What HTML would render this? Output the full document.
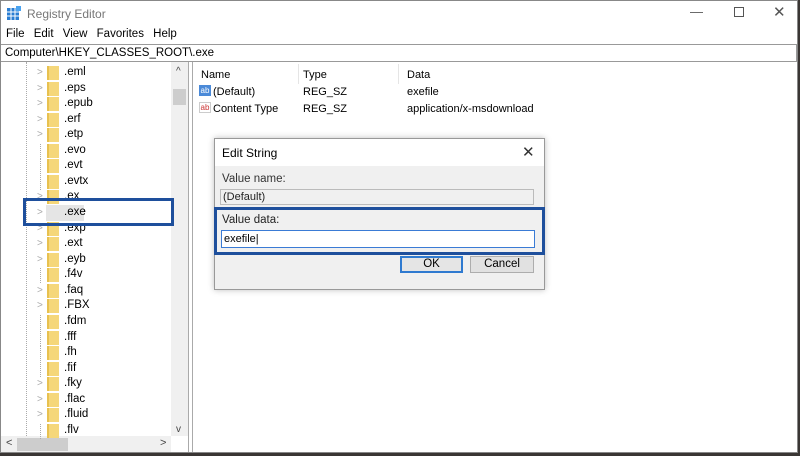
<!DOCTYPE html><html><head><style>
*{margin:0;padding:0;box-sizing:border-box}
body{width:800px;height:456px;background:#3a3634;font-family:"Liberation Sans",sans-serif;font-size:11px;color:#000;position:relative;overflow:hidden}
.a{position:absolute}
.win{left:0;top:0;width:798px;height:453px;background:#fff;border:1px solid #888}
.tr{position:absolute;left:64px;font-size:11.5px}
.fo{position:absolute;left:47px;width:12px;height:14px;background:#f5d77a;border-left:2px solid #e8c14f}
.ar{position:absolute;left:37px;color:#aaa;font-size:10px}
.ln{position:absolute;left:40px;width:1px;height:15px;border-left:1px dotted #aaa}
</style></head><body>
<div class="a win"></div>
<svg class="a" style="left:7px;top:6px" width="14" height="14"><rect x="0" y="2" width="12" height="12" fill="#2a7ed3"/><g stroke="#fff" stroke-width="1"><line x1="4" y1="2" x2="4" y2="14"/><line x1="8" y1="2" x2="8" y2="14"/><line x1="0" y1="6" x2="12" y2="6"/><line x1="0" y1="10" x2="12" y2="10"/></g><rect x="9" y="0" width="5" height="5" fill="#4aa3f0"/></svg>
<div class="a" style="left:27px;top:7px;font-size:12px;color:#777">Registry Editor</div>
<div class="a" style="left:690px;top:4px;font-size:13px;color:#555">—</div>
<div class="a" style="left:734px;top:7px;width:10px;height:10px;border:1px solid #555"></div>
<div class="a" style="left:773px;top:3px;font-size:15px;color:#555">✕</div>
<div class="a" style="left:6px;top:28px;font-size:11.5px;word-spacing:6px">File Edit View Favorites Help</div>
<div class="a" style="left:1px;top:44px;width:796px;height:18px;border:1px solid #999;border-left:none"></div>
<div class="a" style="left:5px;top:47px;font-size:11.5px">Computer\HKEY_CLASSES_ROOT\.exe</div>
<div class="a" style="left:1px;top:62px;width:188px;height:390px;border-right:1px solid #aaa"></div>
<div class="a" style="left:171px;top:62px;width:17px;height:374px;background:#f0f0f0"></div>
<div class="a" style="left:173px;top:89px;width:13px;height:16px;background:#cdcdcd"></div>
<div class="a" style="left:176px;top:66px;font-size:10px;color:#444">^</div>
<div class="a" style="left:176px;top:424px;font-size:10px;color:#444">v</div>
<div class="a" style="left:1px;top:436px;width:170px;height:16px;background:#f0f0f0"></div>
<div class="a" style="left:17px;top:438px;width:51px;height:13px;background:#cdcdcd"></div>
<div class="a" style="left:6px;top:437px;color:#444">&lt;</div>
<div class="a" style="left:160px;top:437px;color:#444">&gt;</div>
<div class="a" style="left:26px;top:62px;width:1px;height:374px;border-left:1px dotted #aaa"></div>
<div class="a" style="left:192px;top:62px;width:1px;height:390px;background:#aaa"></div>
<div class="a" style="left:193px;top:62px;width:604px;height:390px">
<div class="a" style="left:105px;top:2px;width:1px;height:20px;background:#e5e5e5"></div>
<div class="a" style="left:205px;top:2px;width:1px;height:20px;background:#e5e5e5"></div>
<div class="a" style="left:8px;top:7px">Name</div><div class="a" style="left:110px;top:7px">Type</div><div class="a" style="left:214px;top:7px">Data</div>
<div class="a" style="left:6px;top:23px;width:12px;height:11px;background:#4b8ad8;color:#fff;font-size:8px;line-height:11px;text-align:center">ab</div>
<div class="a" style="left:20px;top:24px">(Default)</div><div class="a" style="left:110px;top:24px">REG_SZ</div><div class="a" style="left:214px;top:24px">exefile</div>
<div class="a" style="left:6px;top:40px;width:12px;height:11px;border:1px solid #ccc;color:#c33;font-size:8px;line-height:9px;text-align:center">ab</div>
<div class="a" style="left:20px;top:41px">Content Type</div><div class="a" style="left:110px;top:41px">REG_SZ</div><div class="a" style="left:214px;top:41px">application/x-msdownload</div>
</div>
<div id="tree"></div>
<script>
var it=[[".eml",1],[".eps",1],[".epub",1],[".erf",1],[".etp",1],[".evo",0],[".evt",0],[".evtx",0],[".ex",1],[".exe",1],[".exp",1],[".ext",1],[".eyb",1],[".f4v",0],[".faq",1],[".FBX",1],[".fdm",0],[".fff",0],[".fh",0],[".fif",0],[".fky",1],[".flac",1],[".fluid",1],[".flv",0]];
var h="";it.forEach(function(t,i){var y=66+i*15.56;
h+='<div class="fo" style="top:'+(y)+'px"></div><div class="tr" style="top:'+(y)+'px">'+t[0]+'</div>';
h+=t[1]?'<div class="ar" style="top:'+(y+1)+'px">&gt;</div>':'<div class="ln" style="top:'+y+'px"></div>';});
document.getElementById("tree").innerHTML=h;
</script>
<div class="a" style="left:46px;top:205px;width:38px;height:16px;background:#e5e5e5"></div>
<div class="a" style="left:64px;top:206px;font-size:11.5px">.exe</div>
<div class="a" style="left:23px;top:198px;width:151px;height:28px;border:3px solid #1e4f9c"></div>
<div class="a" style="left:214px;top:138px;width:331px;height:152px;background:#f0f0f0;border:1px solid #999;box-shadow:0 0 6px rgba(0,0,0,.25)"></div>
<div class="a" style="left:215px;top:139px;width:329px;height:27px;background:#fff"></div>
<div class="a" style="left:222px;top:146px;font-size:12px">Edit String</div>
<div class="a" style="left:522px;top:143px;font-size:15px;color:#333">✕</div>
<div class="a" style="left:222px;top:173px;color:#333;font-size:11.5px">Value name:</div>
<div class="a" style="left:220px;top:189px;width:314px;height:16px;background:#f0f0f0;border:1px solid #bbb"></div>
<div class="a" style="left:223px;top:191px;color:#222">(Default)</div>
<div class="a" style="left:222px;top:214px;color:#222;font-size:11.5px">Value data:</div>
<div class="a" style="left:221px;top:230px;width:314px;height:18px;background:#fff;border:1px solid #3a7bd5"></div>
<div class="a" style="left:224px;top:233px">exefile|</div>
<div class="a" style="left:214px;top:207px;width:331px;height:48px;border:3px solid #1e4f9c"></div>
<div class="a" style="left:400px;top:256px;width:63px;height:17px;background:#e5e5e5;border:2px solid #2f7ad0;text-align:center;line-height:13px;font-size:11.5px">OK</div>
<div class="a" style="left:470px;top:256px;width:64px;height:17px;background:#e1e1e1;border:1px solid #adadad;text-align:center;line-height:15px;font-size:11.5px">Cancel</div>
</body></html>
